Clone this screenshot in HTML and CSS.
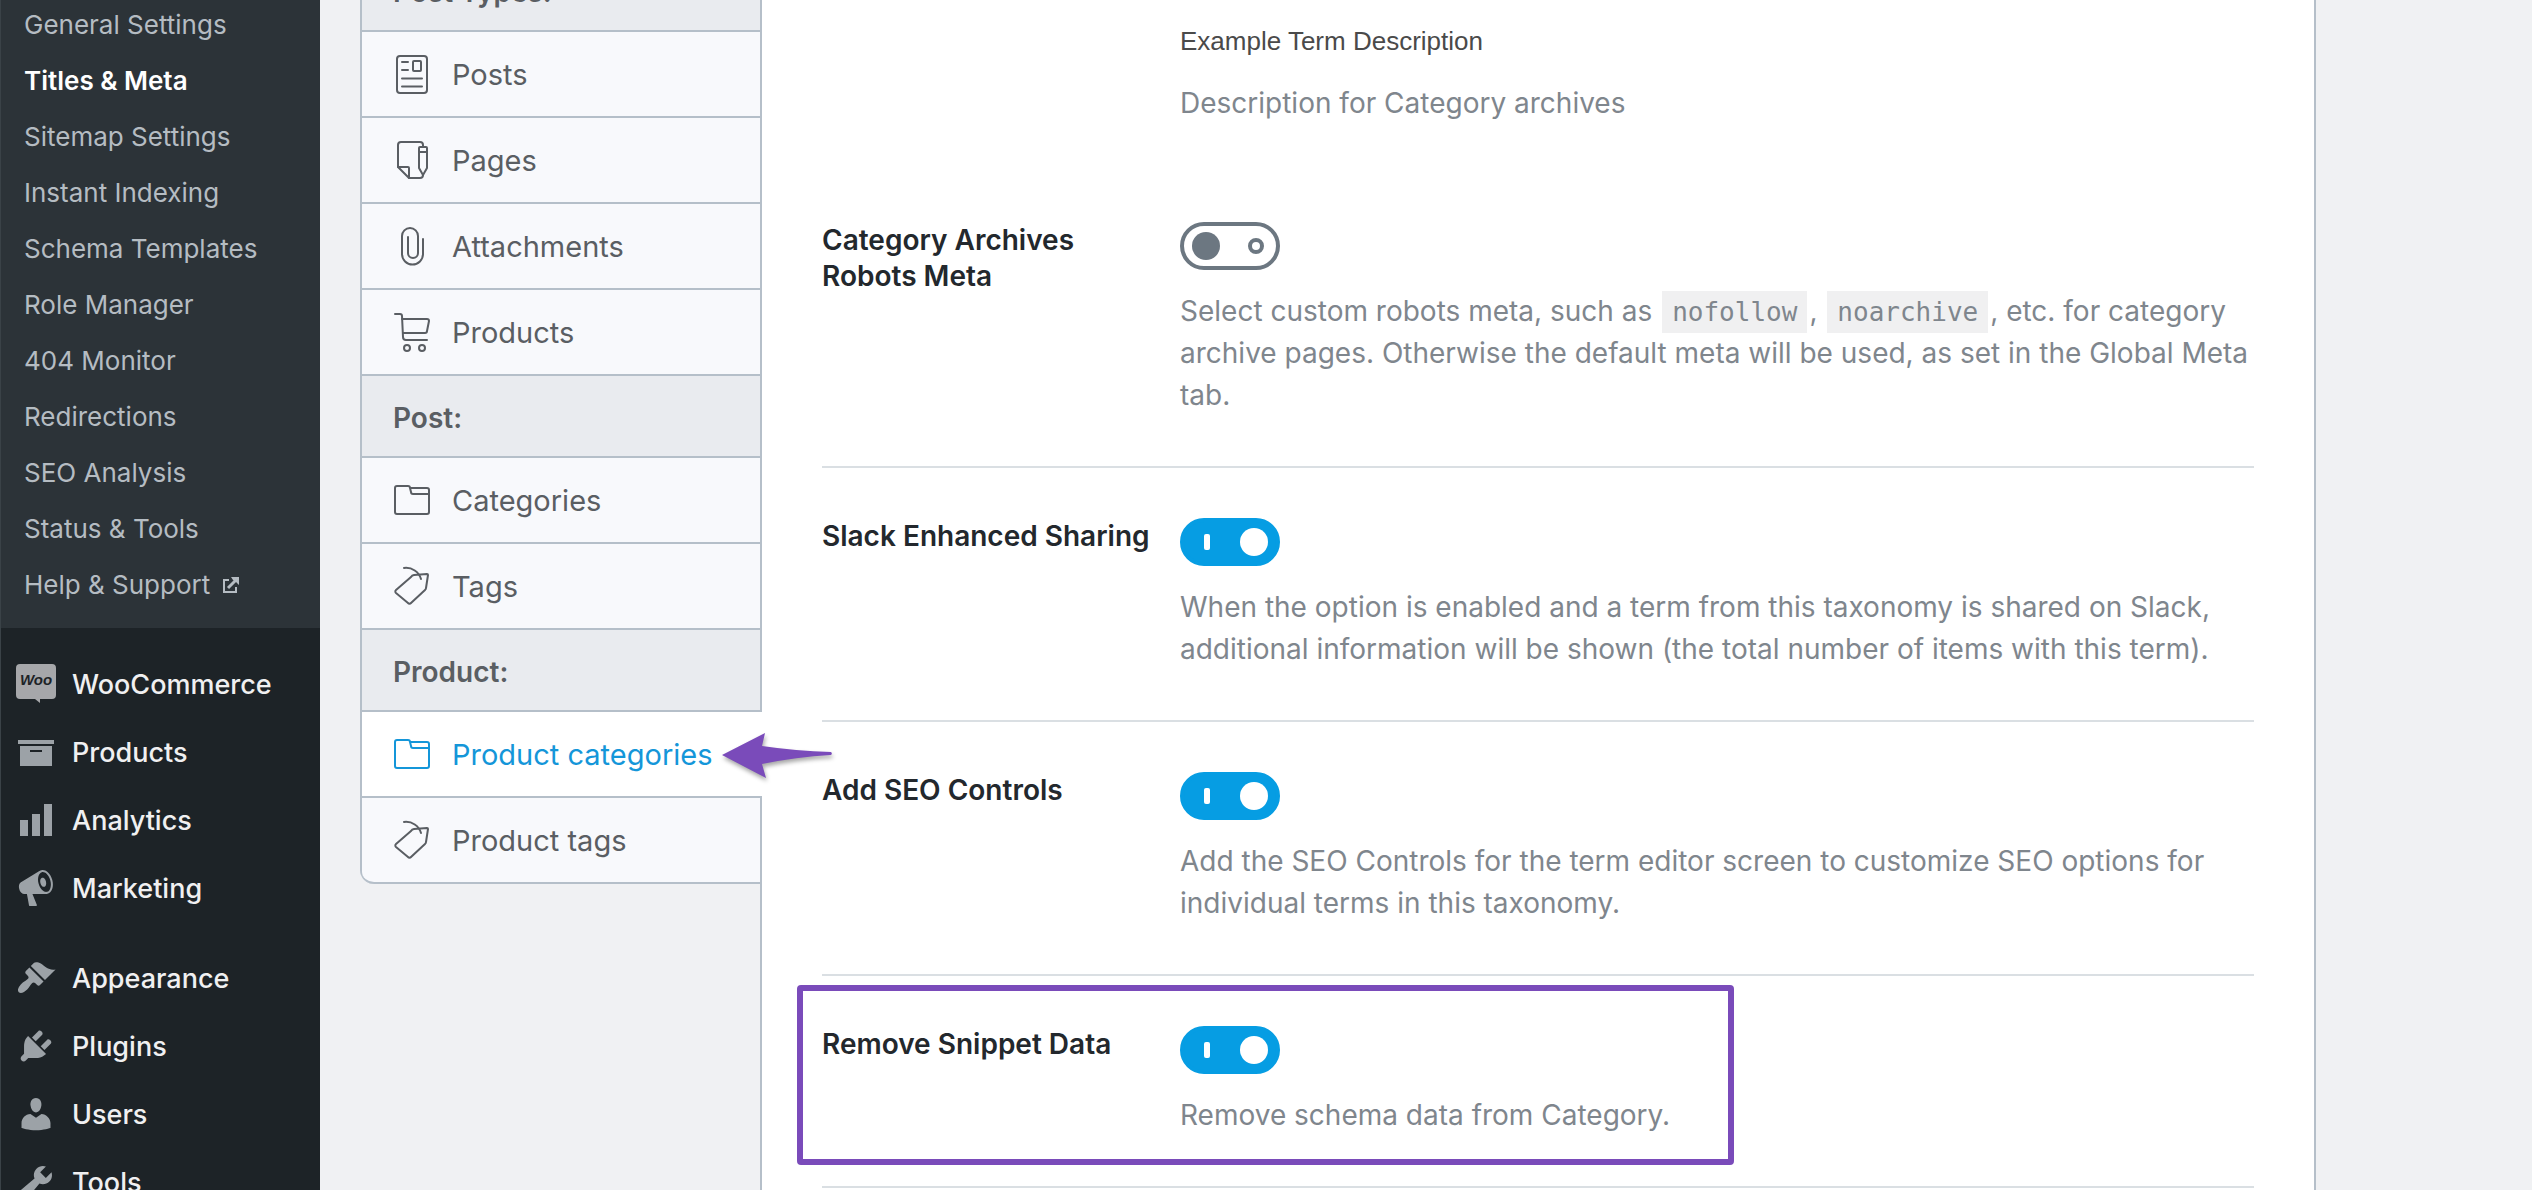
FILE: index.html
```html
<!DOCTYPE html>
<html lang="en">
  <head>
    <meta charset="UTF-8" />
    <meta name="viewport" content="width=device-width, initial-scale=1.0" />
    <title>Titles &amp; Meta</title>
    <link rel="stylesheet" href="styles.css">
  </head>
  <body>
    <div class="admin">
      <nav class="sidebar" aria-label="Main menu">
        <ul class="submenu">
          <li><a href="#">General Settings</a></li>
          <li><a href="#" class="current" aria-current="page">Titles &amp; Meta</a></li>
          <li><a href="#">Sitemap Settings</a></li>
          <li><a href="#">Instant Indexing</a></li>
          <li><a href="#">Schema Templates</a></li>
          <li><a href="#">Role Manager</a></li>
          <li><a href="#">404 Monitor</a></li>
          <li><a href="#">Redirections</a></li>
          <li><a href="#">SEO Analysis</a></li>
          <li><a href="#">Status &amp; Tools</a></li>
          <li>
            <a href="#">Help &amp; Support
              <svg class="external" viewBox="0 0 18 18" aria-hidden="true">
                <path d="M7 4H2v12h12v-5" fill="none" stroke="currentColor" stroke-width="2" />
                <path d="M6 12l8-8" fill="none" stroke="currentColor" stroke-width="3" />
                <path d="M9 1h8v8l-3-3-3-2z" fill="currentColor" />
              </svg>
            </a>
          </li>
        </ul>

        <ul class="menu">
          <li>
            <a href="#">
              <svg viewBox="0 0 40 40" aria-hidden="true">
                <path class="woo" d="M4 0h32a4 4 0 0 1 4 4v27a4 4 0 0 1-4 4H24v4l-5-4H4a4 4 0 0 1-4-4V4a4 4 0 0 1 4-4z" />
                <text class="woo-text" x="20" y="21" text-anchor="middle">Woo</text>
              </svg>
              WooCommerce
            </a>
          </li>
          <li>
            <a href="#">
              <svg viewBox="0 0 20 20" aria-hidden="true">
                <path d="M19 4v2H1V4h18zM2 7h16v10H2V7zm11 3V9H7v1h6z" />
              </svg>
              Products
            </a>
          </li>
          <li>
            <a href="#">
              <svg viewBox="0 0 20 20" aria-hidden="true">
                <path d="M18 18V2h-4v16h4zm-6 0V7H8v11h4zm-6 0v-8H2v8h4z" />
              </svg>
              Analytics
            </a>
          </li>
          <li>
            <a href="#">
              <svg viewBox="0 0 20 20" aria-hidden="true">
                <path fill-rule="evenodd" d="M18.15 5.94c.46 1.62.38 3.22-.02 4.48-.42 1.28-1.26 2.18-2.3 2.48-.16.06-.26.06-.4.06-.06.02-.12.02-.18.02-.06.02-.14.02-.22.02h-6.8l2.22 5.5c.02.14-.06.26-.14.34-.08.1-.24.16-.34.16H6.95c-.1 0-.26-.06-.34-.16-.08-.08-.16-.2-.14-.34l-1-5.5H4.25l-.02-.02c-.5.06-1.08-.18-1.54-.62s-.88-1.08-1.06-1.88c-.24-.8-.2-1.56-.02-2.2.18-.62.58-1.08 1.06-1.3l.02-.02 9-5.4c.1-.06.18-.1.24-.16.06-.04.14-.08.24-.12.16-.08.28-.12.5-.18 1.04-.3 2.24.1 3.22.98s1.84 2.24 2.26 3.86zm-2.58 5.98h-.02c.4-.1.74-.34 1.04-.7.58-.7.86-1.76.86-3.04 0-.64-.1-1.3-.28-1.98-.34-1.36-1.02-2.5-1.78-3.24s-1.68-1.1-2.46-.88c-.82.22-1.4.96-1.7 2-.32 1.04-.28 2.36.06 3.72.38 1.36 1 2.5 1.8 3.24.78.74 1.62 1.1 2.48.88z" />
                <path d="M13.03 4.84c.22-.04.42-.02.62.04.38.16.76.48 1.02 1s.42 1.2.42 1.78c0 .3-.04.56-.12.8-.18.48-.44.84-.86.94-.34.1-.8-.06-1.14-.4s-.64-.86-.78-1.5c-.18-.62-.12-1.24.02-1.72s.48-.84.82-.94z" />
              </svg>
              Marketing
            </a>
          </li>
        </ul>

        <ul class="menu">
          <li>
            <a href="#">
              <svg viewBox="0 0 20 20" aria-hidden="true">
                <path d="M14.48 11.06L7.41 3.99l1.5-1.5c.5-.56 2.3-.47 3.51.32 1.21.8 1.43 1.28 2.91 2.1 1.18.64 2.45 1.26 4.45.85zm-.71.71L6.7 4.7 4.93 6.47c-.39.39-.39 1.02 0 1.41l1.06 1.06c.39.39.39 1.03 0 1.42-.6.6-1.43 1.11-2.21 1.69-.35.26-.7.53-1.01.84C1.43 14.23.4 16.08 1.4 17.07c.99 1 2.84-.03 4.18-1.36.31-.31.58-.66.85-1.02.57-.78 1.08-1.61 1.69-2.21.39-.39 1.02-.39 1.41 0l1.06 1.06c.39.39 1.02.39 1.41 0z" />
              </svg>
              Appearance
            </a>
          </li>
          <li>
            <a href="#">
              <svg viewBox="0 0 20 20" aria-hidden="true">
                <path d="M13.11 4.36L9.87 7.6 8 5.73l3.24-3.24c.35-.34 1.05-.2 1.56.32.52.51.66 1.21.31 1.55zm-8 1.77l.91-1.12 9.01 9.01-1.19.84c-.71.71-2.63 1.16-3.82 1.16H6.14L4.9 17.26c-.59.59-1.54.59-2.12 0-.59-.58-.59-1.53 0-2.12l1.24-1.24v-3.88c0-1.13.4-3.19 1.09-3.89zm7.26 3.97l3.24-3.24c.34-.35 1.04-.21 1.55.31.52.51.66 1.21.31 1.55l-3.24 3.25z" />
              </svg>
              Plugins
            </a>
          </li>
          <li>
            <a href="#">
              <svg viewBox="0 0 20 20" aria-hidden="true">
                <path d="M10 9.25c-2.27 0-2.73-3.44-2.73-3.44C7 4.02 7.82 2 9.97 2c2.16 0 2.98 2.02 2.71 3.81 0 0-.41 3.44-2.68 3.44zm0 2.57L12.72 10c2.39 0 4.52 2.33 4.52 4.53v2.49s-3.65 1.13-7.24 1.13c-3.65 0-7.24-1.13-7.24-1.13v-2.49c0-2.25 1.94-4.48 4.47-4.48z" />
              </svg>
              Users
            </a>
          </li>
          <li>
            <a href="#">
              <svg viewBox="0 0 20 20" aria-hidden="true">
                <path d="M16.68 9.77c-1.34 1.34-3.3 1.67-4.95.99l-5.41 6.52c-.99.99-2.59.99-3.58 0s-.99-2.59 0-3.57l6.52-5.42c-.68-1.65-.35-3.61.99-4.95 1.28-1.28 3.12-1.62 4.72-1.06l-2.89 2.89 2.82 2.82 2.86-2.87c.53 1.58.18 3.39-1.08 4.65z" />
              </svg>
              Tools
            </a>
          </li>
        </ul>
      </nav>

      <main class="settings">
        <nav class="tabs" aria-label="Settings sections">
          <h2 class="tabs-title">Post Types:</h2>
          <a class="tab" href="#">
            <svg viewBox="0 0 40 40" aria-hidden="true">
              <rect x="5" y="2" width="30" height="37" rx="3" />
              <path d="M10 8h6M10 16h6M10 24.5h20M10 32.5h20" />
              <rect x="21" y="7" width="8" height="10" rx="1" />
            </svg>
            Posts
          </a>
          <a class="tab" href="#">
            <svg viewBox="0 0 40 40" aria-hidden="true">
              <path d="M31 7V5a3 3 0 0 0-3-3H9a3 3 0 0 0-3 3v22l11 11h11a3 3 0 0 0 3-3" />
              <path d="M6 27h10a1 1 0 0 1 1 1v10" />
              <path d="M27 8a1 1 0 0 1 1-1h6a1 1 0 0 1 1 1v20l-4 7-4-7zM27 12h8" />
            </svg>
            Pages
          </a>
          <a class="tab" href="#">
            <svg viewBox="0 0 40 40" aria-hidden="true">
              <path d="M31 13v15a10 10 0 0 1-21 0V10a8 8 0 0 1 16 0v17a5 5 0 0 1-10 0V11" />
            </svg>
            Attachments
          </a>
          <a class="tab" href="#">
            <svg viewBox="0 0 40 40" aria-hidden="true">
              <path d="M3 2h5a2 2 0 0 1 2 2l1 21a3 3 0 0 0 3 3h21" />
              <path d="M10 7h25a2 2 0 0 1 2 2l-2 10a2 2 0 0 1-2 2H11" />
              <circle cx="15" cy="36" r="3" />
              <circle cx="30" cy="36" r="3" />
            </svg>
            Products
          </a>

          <h2 class="tabs-title">Post:</h2>
          <a class="tab" href="#">
            <svg viewBox="0 0 40 40" aria-hidden="true">
              <path d="M18 8h17a2 2 0 0 1 2 2v22a2 2 0 0 1-2 2H5a2 2 0 0 1-2-2V8a2 2 0 0 1 2-2h11a2 2 0 0 1 2 2l1 4a2 2 0 0 0 2 2h16" />
            </svg>
            Categories
          </a>
          <a class="tab" href="#">
            <svg viewBox="0 0 40 40" aria-hidden="true">
              <path d="M19 11L4 24a2 2 0 0 0 0 3l12 10a2 2 0 0 0 3 0l14-13a3 3 0 0 0 1-2l2-13a1 1 0 0 0-1-1l-13 1a4 4 0 0 0-3 2z" />
              <path d="M12 2c8-1 15 4 17 11" />
            </svg>
            Tags
          </a>

          <h2 class="tabs-title">Product:</h2>
          <a class="tab tab-active" href="#" aria-current="true">
            <svg viewBox="0 0 40 40" aria-hidden="true">
              <path d="M18 8h17a2 2 0 0 1 2 2v22a2 2 0 0 1-2 2H5a2 2 0 0 1-2-2V8a2 2 0 0 1 2-2h11a2 2 0 0 1 2 2l1 4a2 2 0 0 0 2 2h16" />
            </svg>
            Product categories
            <svg class="arrow" viewBox="0 0 112 48" aria-hidden="true">
              <path d="M0 22L43 0l-3 13q34 5 69 6a2 2 0 0 1 0 3q-35 2-69 9l4 14z" />
            </svg>
          </a>
          <a class="tab" href="#">
            <svg viewBox="0 0 40 40" aria-hidden="true">
              <path d="M19 11L4 24a2 2 0 0 0 0 3l12 10a2 2 0 0 0 3 0l14-13a3 3 0 0 0 1-2l2-13a1 1 0 0 0-1-1l-13 1a4 4 0 0 0-3 2z" />
              <path d="M12 2c8-1 15 4 17 11" />
            </svg>
            Product tags
          </a>
        </nav>

        <form class="panel">
          <div class="field field-example">
            <div class="field-body">
              <p class="example">Example Term Description</p>
              <p class="description">Description for Category archives</p>
            </div>
          </div>

          <div class="field">
            <label class="field-label" for="robots">Category Archives Robots Meta</label>
            <div class="field-body">
              <input class="toggle" type="checkbox" id="robots">
              <p class="description">
                Select custom robots meta, such as <code>nofollow</code>, <code>noarchive</code>, etc. for category
                archive pages. Otherwise the default meta will be used, as set in the Global Meta tab.
              </p>
            </div>
          </div>

          <div class="field">
            <label class="field-label" for="slack">Slack Enhanced Sharing</label>
            <div class="field-body">
              <input class="toggle" type="checkbox" id="slack" checked>
              <p class="description">
                When the option is enabled and a term from this taxonomy is shared on Slack,
                additional information will be shown (the total number of items with this term).
              </p>
            </div>
          </div>

          <div class="field">
            <label class="field-label" for="controls">Add SEO Controls</label>
            <div class="field-body">
              <input class="toggle" type="checkbox" id="controls" checked>
              <p class="description">
                Add the SEO Controls for the term editor screen to customize SEO options for
                individual terms in this taxonomy.
              </p>
            </div>
          </div>

          <div class="field field-highlight">
            <label class="field-label" for="snippet">Remove Snippet Data</label>
            <div class="field-body">
              <input class="toggle" type="checkbox" id="snippet" checked>
              <p class="description">Remove schema data from Category.</p>
            </div>
          </div>
        </form>
      </main>
    </div>
  </body>
</html>
```

FILE: styles.css
```css
*,
*::before,
*::after {
  margin: 0;
  padding: 0;
  box-sizing: border-box;
}
body {
  background-color: #f0f1f3;
  color: #5a5e63;
  font-family: Inter, "Liberation Sans", sans-serif;
  font-size: 28px;
}
a {
  color: inherit;
  text-decoration: none;
}
ul {
  list-style: none;
}
.admin {
  display: flex;
  height: 100vh;
  overflow: hidden;
}

/* Dark admin menu */
.sidebar {
  flex: 0 0 320px;
  background: #1d2327;
  border-left: 1px solid #3a4247;
}
.submenu {
  margin-top: -3px;
  padding-bottom: 15px;
  background: #2c3338;
}
.submenu a {
  display: block;
  padding-left: 23px;
  font-size: 26px;
  line-height: 56px;
  color: #b5bcc2;
}
.submenu .current {
  color: #fff;
  font-weight: 600;
}
.external {
  width: 18px;
  height: 18px;
  margin-left: 4px;
}
.menu {
  margin-top: 22px;
}
.menu a {
  display: flex;
  align-items: center;
  gap: 16px;
  height: 68px;
  padding-left: 15px;
  font-size: 27px;
  font-weight: 500;
  color: #f0f0f1;
}
.menu svg {
  width: 40px;
  height: 40px;
  fill: #9ca2a7;
}
.menu .woo {
  fill: #a6a7aa;
}
.menu .woo-text {
  fill: #1d2327;
  font-family: "Liberation Sans", Arial, sans-serif;
  font-size: 15px;
  font-style: italic;
  font-weight: 700;
}

/* Tabs */
.settings {
  flex: 1;
  display: flex;
  align-items: flex-start;
  padding: 0 216px 0 40px;
}
.tabs {
  flex: 0 0 400px;
  margin-top: -50px;
  border: solid #b5bfc9;
  border-width: 0 0 0 2px;
  border-radius: 0 0 0 14px;
}
.tabs-title {
  height: 82px;
  padding-left: 31px;
  background: #e9ebef;
  border-bottom: 2px solid #b5bfc9;
  font-size: 28px;
  font-weight: 600;
  line-height: 84px;
}
.tab {
  position: relative;
  display: flex;
  align-items: center;
  gap: 20px;
  height: 86px;
  padding-left: 30px;
  background: #f8f9fc;
  border-bottom: 2px solid #b5bfc9;
  font-size: 29px;
}
.tab:last-child {
  border-radius: 0 0 0 12px;
}
.tab svg {
  width: 40px;
  height: 40px;
  fill: none;
  stroke: currentColor;
  stroke-width: 2;
  stroke-linecap: round;
  stroke-linejoin: round;
}
/* covers the panel border so the tab opens into the panel */
.tab-active {
  z-index: 1;
  margin-right: -2px;
  background: #fff;
  color: #1496d9;
}
.tab .arrow {
  position: absolute;
  top: 21px;
  left: 360px;
  width: 112px;
  height: 48px;
  overflow: visible;
  fill: #7a4bba;
  stroke: none;
  filter: drop-shadow(1px 3px 2px rgba(0, 0, 0, 0.35));
}

/* Options panel */
.panel {
  flex: 1;
  min-height: 100vh;
  padding: 0 60px;
  background: #fff;
  border: solid #b5bfc9;
  border-width: 0 2px;
}
.field {
  position: relative;
  display: grid;
  grid-template-columns: 338px 1fr;
  column-gap: 20px;
  padding: 50px 0;
  border-bottom: 2px solid #dadfe3;
}
.field-example {
  padding: 20px 0 48px;
  border-bottom: 0;
}
.field-body {
  grid-column: 2;
}
.field-label {
  color: #23282d;
  font-weight: 600;
  line-height: 36px;
}
.example {
  margin-bottom: 20px;
  color: #4a4a4a;
  font-family: "Liberation Sans", Arial, sans-serif;
  font-size: 26px;
  line-height: 42px;
}
.description {
  color: #7f868d;
  line-height: 42px;
}
.description code {
  margin: 0 2px;
  padding: 6px 10px;
  background: #f0f0f1;
  font-family: "DejaVu Sans Mono", monospace;
  font-size: 26px;
  line-height: 1;
}
.toggle {
  appearance: none;
  display: flex;
  align-items: center;
  justify-content: space-between;
  width: 100px;
  height: 48px;
  margin-bottom: 20px;
  padding: 0 12px 0 8px;
  border: 4px solid #6c7781;
  border-radius: 24px;
}
.toggle::before {
  content: "";
  width: 28px;
  height: 28px;
  border-radius: 50%;
  background: #6c7781;
}
.toggle::after {
  content: "";
  width: 16px;
  height: 16px;
  border: 4px solid #6c7781;
  border-radius: 50%;
}
.toggle:checked {
  padding: 0 8px 0 20px;
  border-color: #069de3;
  background: #069de3;
}
.toggle:checked::before {
  width: 6px;
  height: 16px;
  border-radius: 2px;
  background: #fff;
}
.toggle:checked::after {
  width: 28px;
  height: 28px;
  border: 0;
  background: #fff;
}
.field-highlight::after {
  content: "";
  position: absolute;
  top: 9px;
  left: -25px;
  width: 937px;
  height: 180px;
  border: 6px solid #7a4bba;
  border-radius: 4px;
}
```
